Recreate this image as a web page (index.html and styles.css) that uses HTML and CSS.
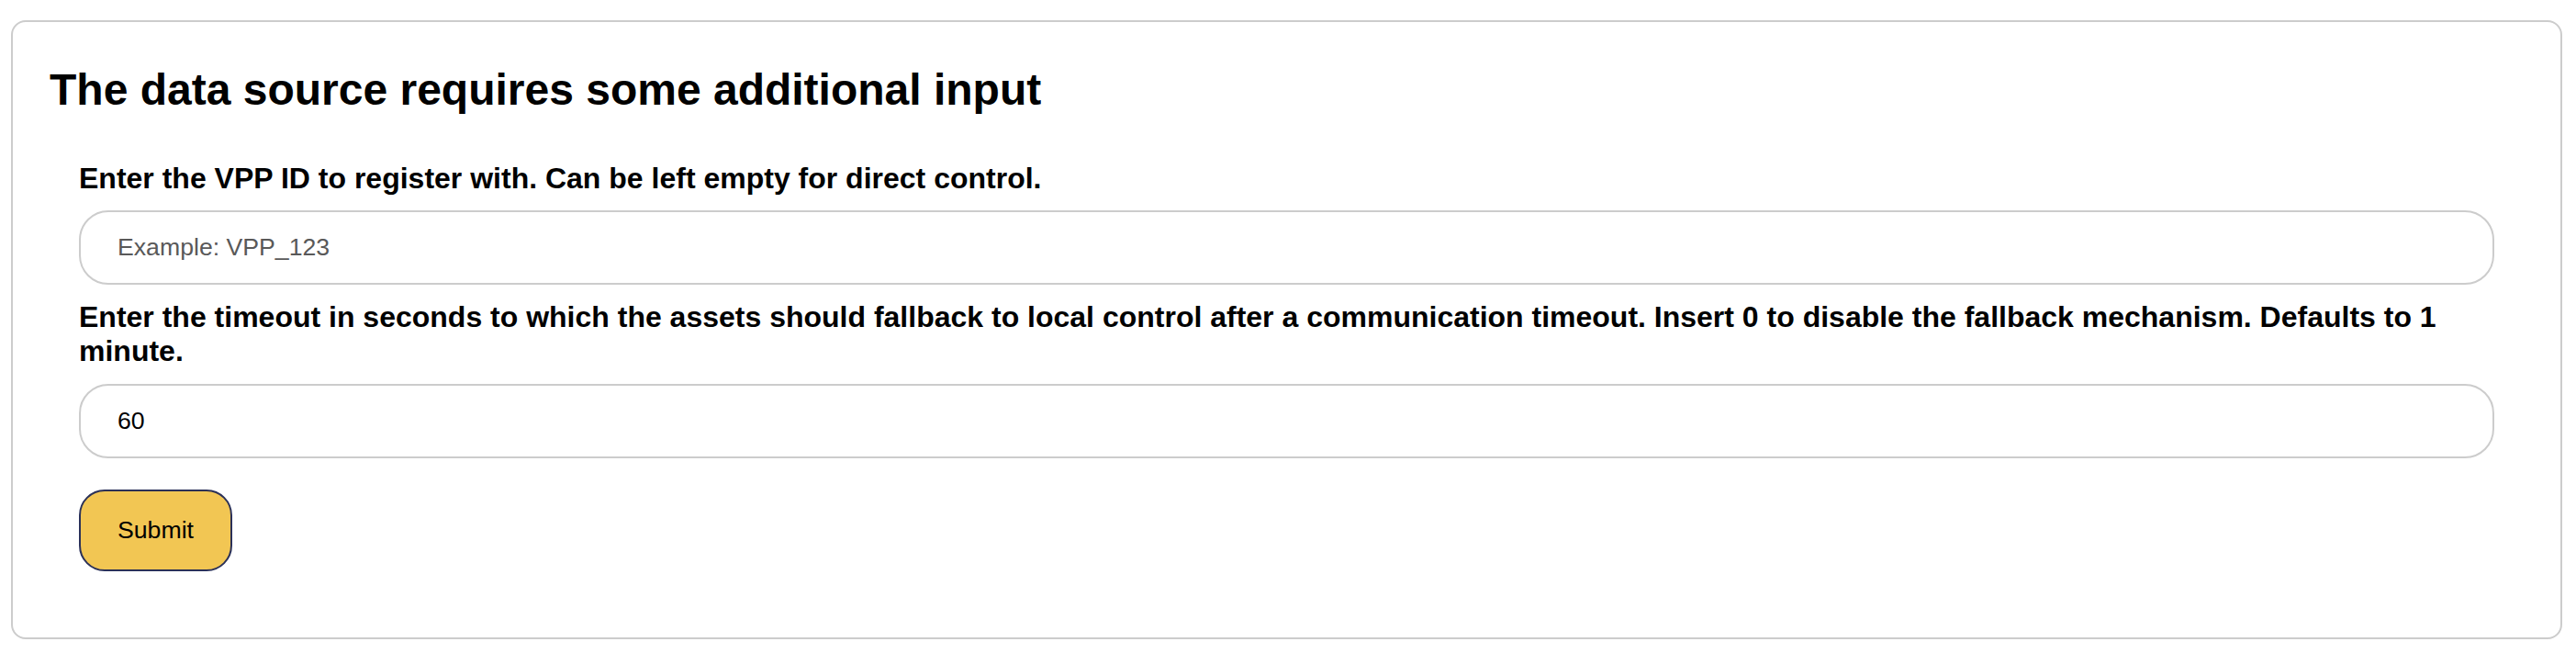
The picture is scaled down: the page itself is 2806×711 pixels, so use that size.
FILE: index.html
```html
<!DOCTYPE html>
<html lang="en">
<head>
<meta charset="utf-8">
<title>Additional input</title>
<link rel="stylesheet" href="styles.css">
</head>
<body>
  <section class="card">
    <h2 class="card-title">The data source requires some additional input</h2>
    <form class="form">
      <div class="field">
        <label class="field-label" for="vpp">Enter the VPP ID to register with. Can be left empty for direct control.</label>
        <input class="field-input" id="vpp" type="text" placeholder="Example: VPP_123">
      </div>
      <div class="field">
        <label class="field-label" for="timeout">Enter the timeout in seconds to which the assets should fallback to local control after a communication timeout. Insert 0 to disable the fallback mechanism. Defaults to 1 minute.</label>
        <input class="field-input" id="timeout" type="text" value="60">
      </div>
      <button class="submit" type="button">Submit</button>
    </form>
  </section>
</body>
</html>
```

FILE: styles.css
```css
* {
  box-sizing: border-box;
}

html, body {
  background: #ffffff;
}

body {
  margin: 22px 15px 0 12px;
  font-family: "Liberation Sans", Arial, sans-serif;
  color: #000;
}

.card {
  border: 2px solid #cccccc;
  border-radius: 16px;
  padding: 46px 40px 40px;
  background: #fff;
}

.card-title {
  margin: 0 0 50.5px;
  font-size: 48px;
  font-weight: bold;
  line-height: normal;
}

.form {
  display: flex;
  flex-direction: column;
  align-items: flex-start;
  padding: 0 32px 32px;
  margin: 0;
}

.field {
  width: 100%;
  display: flex;
  flex-direction: column;
  margin-bottom: 17px;
}

.field + .field {
  margin-bottom: 34.5px;
}

.field-label {
  display: block;
  font-size: 32px;
  font-weight: bold;
  line-height: normal;
  margin-bottom: 16.5px;
}

.field-input {
  width: 100%;
  height: 81px;
  padding: 0 40px;
  border: 2px solid #cccccc;
  border-radius: 32px;
  font-family: "Liberation Sans", Arial, sans-serif;
  font-size: 26.67px;
  color: #000;
  background: #fff;
  outline: none;
}

.field-input::placeholder {
  color: #595959;
  opacity: 1;
}

.submit {
  height: 89px;
  padding: 0 40px;
  border: 2px solid #2b3158;
  border-radius: 28px;
  background: #f2c653;
  color: #000;
  font-family: "Liberation Sans", Arial, sans-serif;
  font-size: 26.67px;
  line-height: normal;
  cursor: pointer;
}
```
